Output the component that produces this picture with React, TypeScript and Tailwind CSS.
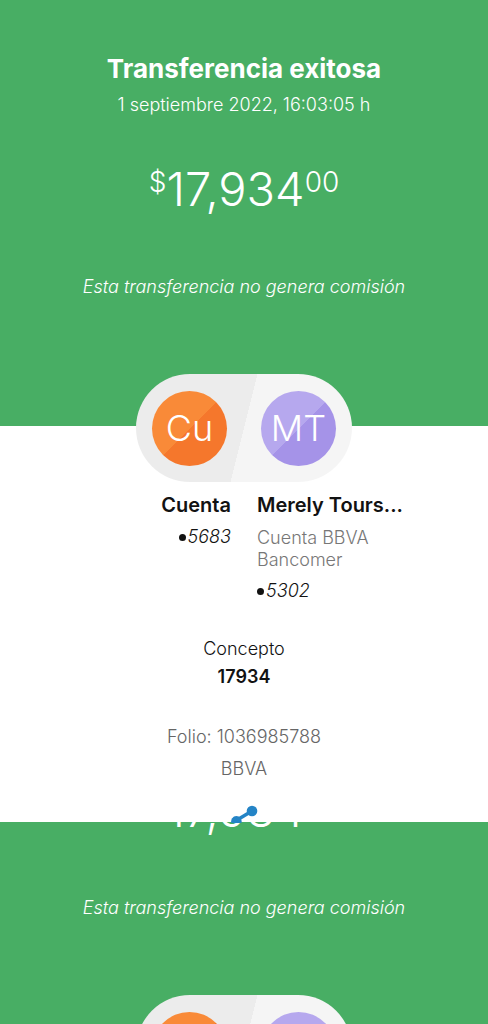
import { clsx } from 'clsx'

interface Party {
  initials: string
  color: string
}

const parties: Party[] = [
  { initials: 'Cu', color: 'bg-[linear-gradient(135deg,#f98a38_50%,#f5772c_50%)]' },
  { initials: 'MT', color: 'bg-[linear-gradient(135deg,#b6a8ee_50%,#a593e8_50%)]' },
]

function Amount() {
  return (
    <p className="flex h-14 items-start justify-center font-light">
      <span className="text-[28px] leading-[42px]">$</span>
      <span className="text-[47px] leading-14">17,934</span>
      <span className="text-[28px] leading-[42px]">00</span>
    </p>
  )
}

function Note({ className }: { className?: string }) {
  return (
    <p className={clsx('text-center text-[18px] leading-6 font-light italic', className)}>
      Esta transferencia no genera comisión
    </p>
  )
}

function Avatars({ className }: { className?: string }) {
  return (
    <div
      className={clsx(
        'mx-auto flex h-[108px] w-[216px] items-center justify-between rounded-full bg-[linear-gradient(104deg,#ececec_50%,#f5f5f5_50%)] px-4',
        className
      )}
    >
      {parties.map((party) => (
        <span
          key={party.initials}
          className={clsx(
            'flex size-[75px] items-center justify-center rounded-full text-[36px] leading-none font-light text-white',
            party.color
          )}
        >
          {party.initials}
        </span>
      ))}
    </div>
  )
}

function AccountNumber({ digits, className }: { digits: string; className?: string }) {
  return (
    <p className={clsx('flex items-center gap-0.5 text-[18px] leading-6 font-light italic', className)}>
      <span className="size-[7px] rounded-full bg-[#121212]" />
      {digits}
    </p>
  )
}

function ShareIcon() {
  return (
    <svg
      className="absolute -top-[17px] left-1/2 -ml-[13px]"
      width="28"
      height="18"
      viewBox="0 0 28 18"
      fill="#2484c6"
      aria-hidden="true"
    >
      <path d="M6 15 21 6" stroke="#2484c6" strokeWidth="3.5" />
      <circle cx="21" cy="6" r="5.3" />
      <path d="M.5 18a5.2 5.2 0 1 1 9.8 0z" />
    </svg>
  )
}

export default function App() {
  return (
    <div className="flex h-screen flex-col overflow-hidden bg-white font-['Inter',sans-serif] text-[#121212]">
      <header className="bg-[#48ae64] pt-[53px] pb-[127px] text-white">
        <h1 className="text-center text-[26px] leading-8 font-bold">Transferencia exitosa</h1>
        <p className="mt-2 text-center text-[18px] leading-6 font-light">
          1 septiembre 2022, 16:03:05 h
        </p>
        <div className="mt-11">
          <Amount />
        </div>
        <Note className="mt-[58px]" />
      </header>

      <main>
        <Avatars className="relative -mt-[52px]" />
        <div className="mt-[9px] grid grid-cols-2 gap-[26px]">
          <div className="flex flex-col items-end">
            <h2 className="text-[20px] leading-7 font-semibold">Cuenta</h2>
            <AccountNumber digits="5683" className="mt-1.5" />
          </div>
          <div>
            <h2 className="text-[20px] leading-7 font-semibold">Merely Tours...</h2>
            <p className="mt-2 w-32 text-[18px] leading-[22px] font-light text-[#777]">
              Cuenta BBVA Bancomer
            </p>
            <AccountNumber digits="5302" className="mt-2" />
          </div>
        </div>
        <dl className="mt-8 text-center text-[18px] leading-7">
          <dt className="font-light">Concepto</dt>
          <dd className="font-semibold">17934</dd>
        </dl>
        <div className="mt-[30px] pb-[37px] text-center text-[18px] leading-8 font-light text-[#666]">
          <p>Folio: 1036985788</p>
          <p>BBVA</p>
        </div>
      </main>

      <footer className="relative flow-root min-h-0 flex-1 bg-[#48ae64] text-white">
        <div className="-mt-10">
          <Amount />
        </div>
        <Note className="mt-[58px]" />
        <Avatars className="mt-[75px]" />
        <ShareIcon />
      </footer>
    </div>
  )
}
